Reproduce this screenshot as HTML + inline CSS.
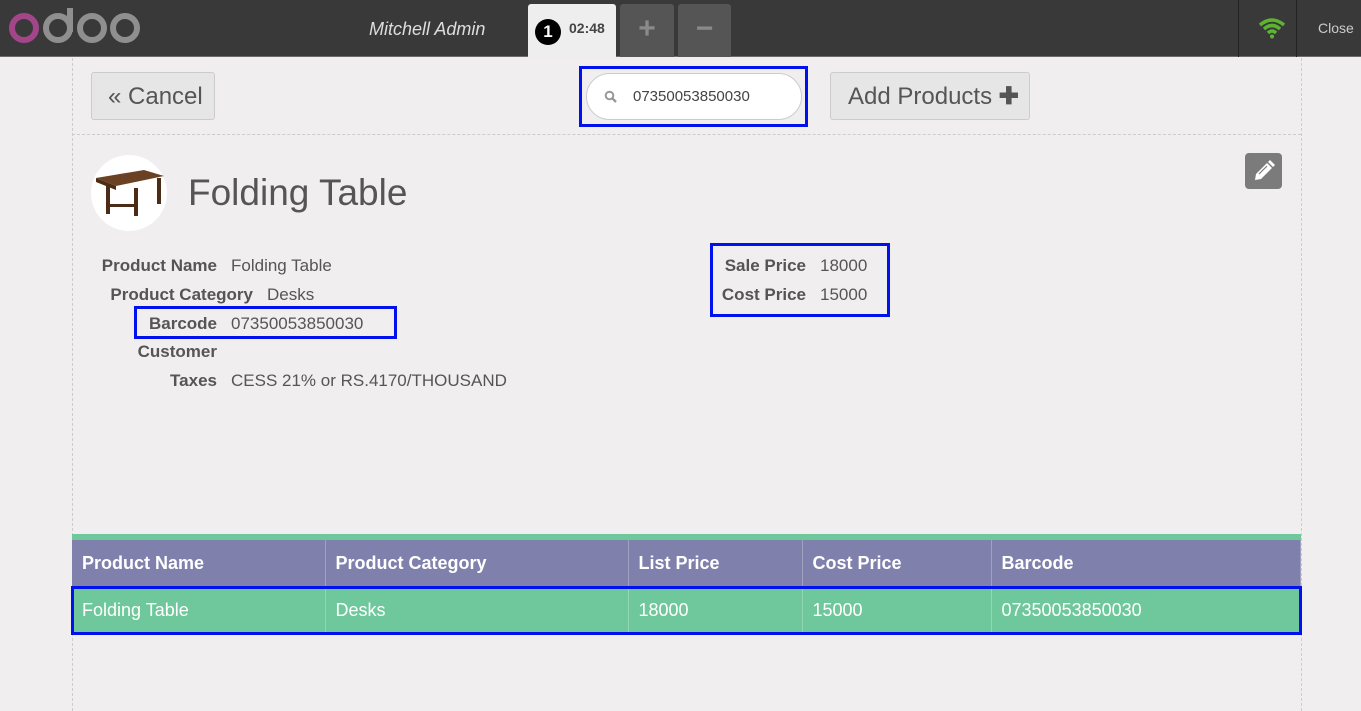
<!DOCTYPE html><html><head><style>
*{margin:0;padding:0;box-sizing:border-box}
body{width:1361px;height:711px;background:#f0eeee;font-family:"Liberation Sans",sans-serif;position:relative;overflow:hidden;color:#555}
.a{position:absolute}
.hdr{left:0;top:0;width:1361px;height:57px;background:#393939;border-bottom:1px solid #6b6b6b}
.lbl{font-weight:bold;font-size:17px;color:#555;text-align:right}
.val{font-size:17px;color:#555}
.box{border:3px solid #0011ee}
th,td{text-align:left;padding-left:10px;font-size:18px;color:#fff;border-right:1px solid rgba(255,255,255,.25)}
th{height:47px;background:#8080ad}
td{height:46px;background:#6ec89b;font-weight:normal}
</style></head><body>
<div class="a hdr"></div>
<svg class="a" style="left:6px;top:6px" width="136" height="40" viewBox="0 0 136 40">
<circle cx="18" cy="22" r="12" stroke="#a24689" stroke-width="6" fill="none"/>
<circle cx="52" cy="22" r="12" stroke="#8f8f8f" stroke-width="6" fill="none"/>
<rect x="61" y="2" width="6" height="24" fill="#8f8f8f"/>
<circle cx="86" cy="22" r="12" stroke="#8f8f8f" stroke-width="6" fill="none"/>
<circle cx="119" cy="22" r="12" stroke="#8f8f8f" stroke-width="6" fill="none"/>
</svg>
<div class="a" style="left:369px;top:19px;font-size:18px;font-style:italic;color:#ddd">Mitchell Admin</div>
<div class="a" style="left:528px;top:4px;width:88px;height:54px;background:#eeeeee;border-radius:3px 3px 0 0"></div>
<div class="a" style="left:535px;top:19px;width:26px;height:26px;border-radius:50%;background:#000;color:#fff;font-weight:bold;font-size:17px;text-align:center;line-height:26px">1</div>
<div class="a" style="left:569px;top:20px;font-size:14px;font-weight:bold;color:#444">02:48</div>
<div class="a" style="left:620px;top:4px;width:54px;height:53px;background:#555;border-radius:3px 3px 0 0;color:#8a8a8a;font-size:30px;font-weight:bold;text-align:center;line-height:50px">+</div>
<div class="a" style="left:678px;top:4px;width:53px;height:53px;background:#555;border-radius:3px 3px 0 0;color:#8a8a8a;font-size:30px;font-weight:bold;text-align:center;line-height:50px">−</div>
<div class="a" style="left:1238px;top:0;width:1px;height:57px;background:#222"></div>
<div class="a" style="left:1296px;top:0;width:1px;height:57px;background:#222"></div>
<svg class="a" style="left:1258px;top:17px" width="28" height="22" viewBox="0 0 28 22"><path d="M2 8 Q14 -2 26 8" stroke="#5cb531" stroke-width="3.5" fill="none"/><path d="M6 12 Q14 5 22 12" stroke="#5cb531" stroke-width="3.5" fill="none"/><path d="M10 16 Q14 12 18 16" stroke="#5cb531" stroke-width="3.5" fill="none"/><circle cx="14" cy="19.5" r="2" fill="#5cb531"/></svg>
<div class="a" style="left:1318px;top:20px;font-size:14px;color:#ccc">Close</div>
<div class="a" style="left:72px;top:58px;height:653px;border-left:1px dashed #ccc"></div>
<div class="a" style="left:1301px;top:58px;height:653px;border-left:1px dashed #ccc"></div>
<div class="a" style="left:72px;top:134px;width:1229px;border-top:1px dashed #ccc"></div>
<div class="a" style="left:91px;top:72px;width:124px;height:48px;background:#e6e6e6;border:1px solid #ccc;border-radius:3px;font-size:24px;line-height:48px;padding-left:16px;color:#555">« Cancel</div>
<div class="a box" style="left:579px;top:66px;width:229px;height:61px"></div>
<div class="a" style="left:586px;top:73px;width:216px;height:47px;background:#fff;border:1px solid #ccc;border-radius:24px;font-size:15px;line-height:45px;padding-left:46px;color:#444">07350053850030</div>
<svg class="a" style="left:604px;top:90px" width="14" height="14" viewBox="0 0 14 14"><circle cx="5.5" cy="5.5" r="3.8" stroke="#999" stroke-width="2" fill="none"/><path d="M8.5 8.5 L12 12" stroke="#999" stroke-width="2.5"/></svg>
<div class="a" style="left:830px;top:72px;width:200px;height:48px;background:#e6e6e6;border:1px solid #ccc;border-radius:3px;font-size:24px;line-height:48px;padding-left:17px;color:#555">Add Products <b>✚</b></div>
<div class="a" style="left:91px;top:155px;width:76px;height:76px;border-radius:50%;background:#fff"></div>
<svg class="a" style="left:94px;top:168px" width="72" height="50" viewBox="0 0 72 50"><path d="M2 10 L50 2 L70 8 L22 18 Z" fill="#6b4124"/><path d="M2 10 L22 18 L22 22 L2 14Z" fill="#4a2c17"/><rect x="12" y="16" width="4" height="30" fill="#4a2c17"/><rect x="40" y="20" width="4" height="28" fill="#4a2c17"/><rect x="63" y="10" width="4" height="26" fill="#4a2c17"/><rect x="14" y="36" width="28" height="3" fill="#4a2c17"/></svg>
<div class="a" style="left:188px;top:172px;font-size:37px;color:#555">Folding Table</div>
<div class="a" style="left:1245px;top:153px;width:37px;height:36px;background:#7b7b7b;border-radius:4px"></div>
<svg class="a" style="left:1251px;top:159px" width="25" height="25" viewBox="0 0 25 25"><path d="M4 21 L5 15 L16 4 L21 9 L10 20 Z" fill="#fff"/><path d="M17 3 L19 1 L24 6 L22 8 Z" fill="#fff"/><path d="M8 15 L16 7" stroke="#7b7b7b" stroke-width="1.2"/></svg>
<div class="a lbl" style="left:80px;top:256px;width:137px">Product Name</div><div class="a val" style="left:231px;top:256px">Folding Table</div>
<div class="a lbl" style="left:80px;top:285px;width:173px">Product Category</div><div class="a val" style="left:267px;top:285px">Desks</div>
<div class="a box" style="left:134px;top:306px;width:263px;height:33px"></div>
<div class="a lbl" style="left:80px;top:314px;width:137px">Barcode</div><div class="a val" style="left:231px;top:314px">07350053850030</div>
<div class="a lbl" style="left:80px;top:342px;width:137px">Customer</div>
<div class="a lbl" style="left:80px;top:371px;width:137px">Taxes</div><div class="a val" style="left:231px;top:371px">CESS 21% or RS.4170/THOUSAND</div>
<div class="a box" style="left:710px;top:243px;width:180px;height:74px"></div>
<div class="a lbl" style="left:700px;top:256px;width:106px">Sale Price</div><div class="a val" style="left:820px;top:256px">18000</div>
<div class="a lbl" style="left:700px;top:285px;width:106px">Cost Price</div><div class="a val" style="left:820px;top:285px">15000</div>
<div class="a" style="left:72px;top:534px;width:1229px;height:6px;background:#6ec89b"></div>
<table class="a" style="left:72px;top:540px;width:1229px;border-collapse:collapse">
<tr><th style="width:253px">Product Name</th><th style="width:303px">Product Category</th><th style="width:174px">List Price</th><th style="width:189px">Cost Price</th><th>Barcode</th></tr>
<tr><td>Folding Table</td><td>Desks</td><td>18000</td><td>15000</td><td>07350053850030</td></tr>
</table>
<div class="a box" style="left:71px;top:586px;width:1231px;height:49px"></div>
</body></html>
